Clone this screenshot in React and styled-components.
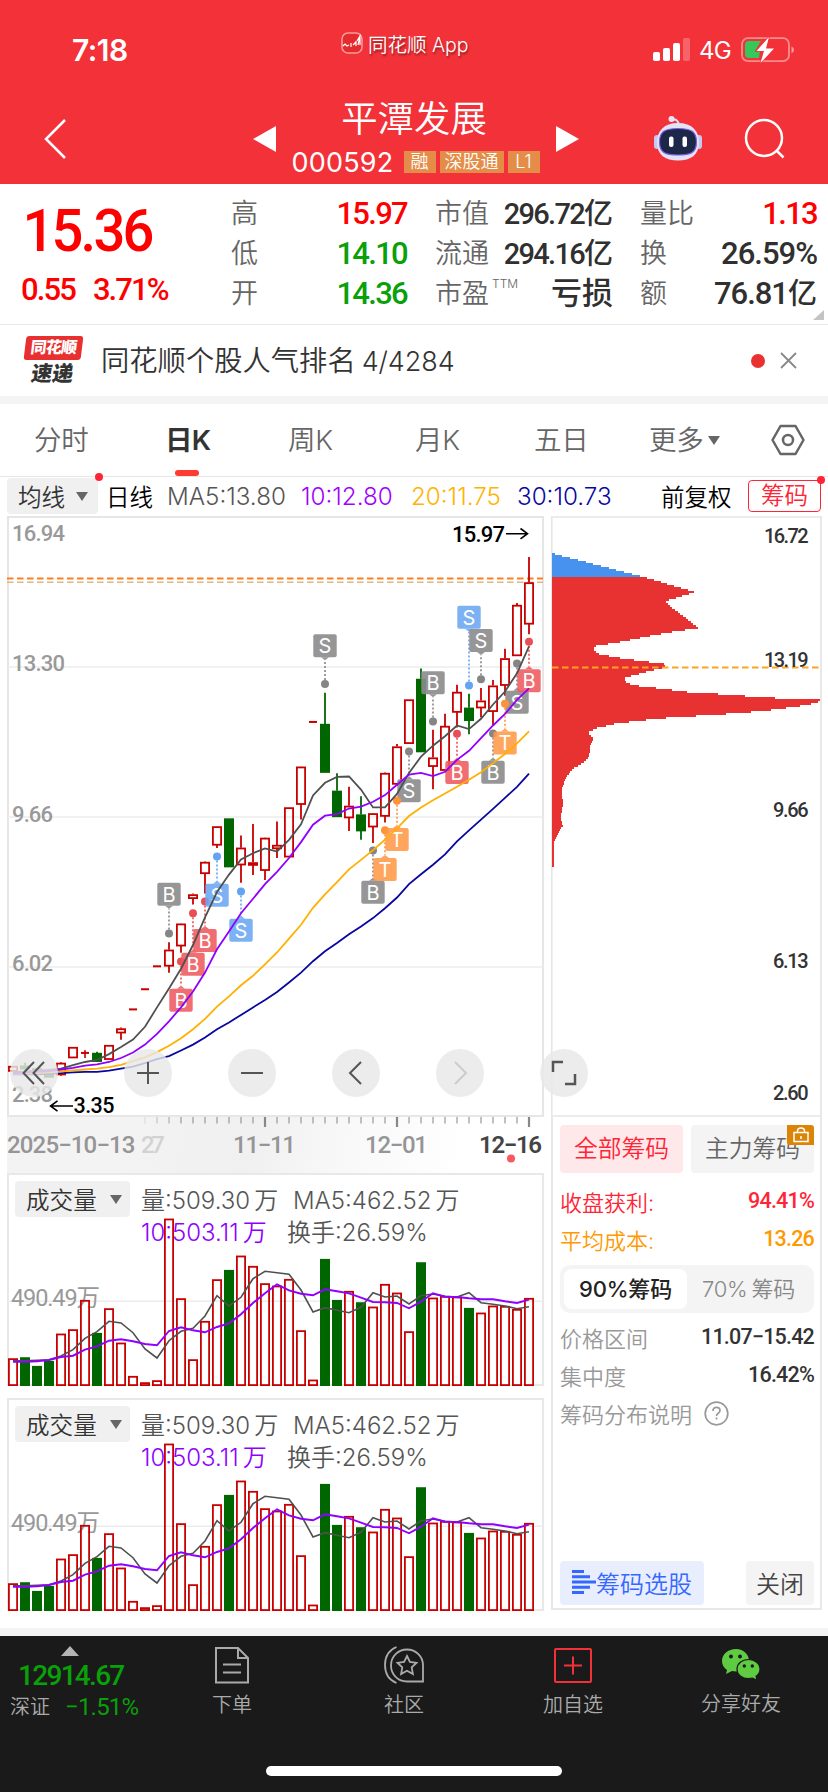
import React from 'react';
import styled, { createGlobalStyle } from 'styled-components';

const ui = 'Inter, "Noto Sans CJK SC", sans-serif';
const num = 'Roboto, "Noto Sans CJK SC", sans-serif';

const GlobalStyle = createGlobalStyle`
  * {
    box-sizing: border-box;
  }

  body {
    margin: 0;
    background: #fff;
    font-family: ${ui};
    color: #333;
  }

  svg {
    display: block;
    flex: none;
    overflow: visible;
  }
`

const Screen = styled.div`
  width: 828px;
  height: 1792px;
  overflow: hidden;
  display: flex;
  flex-direction: column;
  background: #fff;
  white-space: nowrap;
`

/* ---------- header ---------- */

const Header = styled.header`
  height: 184px;
  flex: none;
  background: #f33138;
  color: #fff;
`

const StatusBar = styled.div`
  height: 96px;
  padding: 2px 32px 0 72px;
  display: grid;
  grid-template-columns: 269px 312px 1fr;
  align-items: center;
`

const Clock = styled.div`
  font-size: 30px;
  font-weight: 600;
  letter-spacing: -0.5px;
  padding-top: 2px;
`

const AppMark = styled.div`
  display: flex;
  align-items: center;
  gap: 5px;
  font-size: 19.5px;
  font-weight: 350;
  padding-bottom: 12px;
  text-shadow: 1px 2px 2px rgba(0, 0, 0, 0.4);
`

const StatusIcons = styled.div`
  display: flex;
  align-items: center;
  font-size: 24px;
  padding-top: 2px;

  span {
    width: 50px;
    padding-left: 8px;
    letter-spacing: -0.8px;
  }
`

const NavBar = styled.nav`
  height: 88px;
  padding: 0 44px 0 44px;
  display: grid;
  grid-template-columns: 209px 39px 247px 39px 76px 90px 1fr;
  align-items: center;

  > svg {
    margin-top: -3px;
  }
`

const StockTitle = styled.div`
  height: 88px;
  display: flex;
  flex-direction: column;
  align-items: center;
`

const StockName = styled.h1`
  margin: 3px 0 0 -3px;
  font-size: 36.4px;
  font-weight: 350;
  line-height: 40px;
`

const StockCode = styled.div`
  display: flex;
  align-items: center;
  gap: 4px;
  margin-top: 12px;
  height: 22px;
  font-size: 27px;

  b {
    font-weight: 400;
    margin-right: 7px;
    width: 101px;
    letter-spacing: 0.2px;
  }
`

const Tag = styled.span`
  width: ${props => props.$w}px;
  height: 22px;
  line-height: 21px;
  text-align: center;
  font-size: 18px;
  font-weight: 350;
  background: #e48d49;
`

/* ---------- quote ---------- */

const Quote = styled.section`
  height: 141px;
  flex: none;
  position: relative;
  display: flex;
  border-bottom: 1px solid #e8e8e8;
  font-family: ${num};
`

const PriceBox = styled.div`
  width: 231px;
  color: #f00;
  font-weight: 500;
`

const Price = styled.div`
  padding-left: 24px;
  height: 74px;
  font-size: 60px;
  letter-spacing: -3px;
  line-height: 94px;
  transform: scaleX(0.935);
  transform-origin: left;
`

const Change = styled.div`
  display: flex;
  gap: 18px;
  padding: 16px 0 0 21px;
  font-size: 31px;
  line-height: 32px;
  letter-spacing: -1.9px;
`

const Stats = styled.div`
  width: ${props => props.$w}px;
  margin-right: ${props => props.$gap}px;
  padding-top: 10px;
`

const Stat = styled.div`
  display: flex;
  justify-content: space-between;
  height: 40px;
  line-height: 40px;

  span {
    font-size: 27px;
    font-weight: 350;
    color: #666;
  }

  sup {
    font-family: ${ui};
    font-size: 12px;
    line-height: 12px;
    vertical-align: 15px;
    margin-left: 3px;
  }

  b {
    font-size: ${props => props.$size || 31}px;
    font-weight: 500;
    letter-spacing: ${props => props.$ls || -1.7}px;
    margin-right: ${props => props.$mr || 0}px;
    color: ${props => props.$color || '#303030'};
  }

  i {
    font-style: normal;
    font-size: ${props => props.$unit || 29}px;
    letter-spacing: 0;
  }
`

const Corner = styled.svg`
  position: absolute;
  right: 4px;
  bottom: 4px;
`

/* ---------- news ---------- */

const News = styled.section`
  height: 71px;
  flex: none;
  display: flex;
  align-items: center;
  padding: 0 31px 0 25px;
`

const NewsLogo = styled.div`
  width: 57px;
  margin-right: 19px;
  text-align: center;
  font-weight: 900;
  line-height: 24px;
  color: #333;

  div {
    height: 24px;
    font-size: 16px;
    letter-spacing: -0.8px;
    color: #fff;
    background: #e93030;
    border-radius: 3px;
    transform: skewX(-7deg);
    line-height: 23px;
  }

  p {
    margin: 1px 0 0;
    font-size: 21px;
    line-height: 25px;
    transform: skewX(-9deg);
    padding-right: 2px;
  }
`

const NewsText = styled.div`
  flex: 1;
  font-size: 28.3px;
  font-weight: 350;
  padding-bottom: 4px;

  span {
    font-size: 27px;
    margin-left: 6px;
    letter-spacing: -0.1px;
  }
`

const NewsDot = styled.i`
  width: 14px;
  height: 14px;
  border-radius: 50%;
  background: #ea3131;
  margin-right: 15px;
`

const Band = styled.div`
  height: 8px;
  flex: none;
  background: #f4f4f4;
`

/* ---------- tabs ---------- */

const Tabs = styled.div`
  height: 73px;
  flex: none;
  display: grid;
  grid-template-columns: 34px 131px 123px 127px 119px 115px 122px 1fr;
  align-items: center;
  border-bottom: 1px solid #e6e6e6;
`

const Tab = styled.div`
  height: 72px;
  line-height: 70px;
  position: relative;
  font-size: 27.5px;
  letter-spacing: ${props => (props.$on ? -0.8 : -0.3)}px;
  font-weight: ${props => (props.$on ? 600 : 350)};
  color: ${props => (props.$on ? '#333' : '#666')};
  display: flex;
  align-items: center;
  gap: 5px;

  &::after {
    content: '';
    display: ${props => (props.$on ? 'block' : 'none')};
    position: absolute;
    left: 10px;
    bottom: 0;
    width: 24px;
    height: 6px;
    border-radius: 3px;
    background: #ff3a30;
  }
`

const Caret = styled.i`
  border: 6px solid transparent;
  border-top: ${props => props.$h || 9}px solid #666;
  border-bottom: 0;
`

/* ---------- indicator line ---------- */

const Indicators = styled.div`
  height: 39px;
  flex: none;
  display: flex;
  align-items: center;
  padding: 2px 7px 3px;
  font-size: 23.5px;
  font-weight: 350;
  color: #000;
`

const Select = styled.div`
  position: relative;
  width: ${props => props.$w}px;
  height: 36px;
  display: flex;
  align-items: center;
  justify-content: space-between;
  padding: 0 ${props => props.$pr || 8}px 0 11px;
  border-radius: 4px;
  background: #f0f0f0;
  font-size: 23.6px;
  font-weight: 350;
  color: #333;
`

const Dot = styled.i`
  position: absolute;
  top: -5px;
  right: -5px;
  width: 8px;
  height: 8px;
  border-radius: 50%;
  background: #ff2436;
`

const Ma = styled.span`
  width: ${props => props.$w}px;
  color: ${props => props.$color};
  font-size: ${props => (props.$color ? 24.2 : 23.5)}px;
  padding-left: ${props => props.$pl || 0}px;
`

const ChipButton = styled.div`
  position: relative;
  width: 73px;
  height: 32px;
  margin-left: auto;
  line-height: 29px;
  text-align: center;
  border: 1.5px solid #ff2436;
  border-radius: 4px;
  color: #ff2436;
`

/* ---------- charts ---------- */

const Main = styled.main`
  position: relative;
  height: 1112px;
  flex: none;
  display: flex;
  gap: 7px;
  padding: 0 7px;
`

const LeftColumn = styled.div`
  width: 537px;
`

const DateAxis = styled.div`
  height: 56px;
  background: linear-gradient(100deg, #f3f3f3 0, #f3f3f3 22%, #f0f0f0 45%, #f8f8f8 62%, #fff 85%);
`

const VolumeBox = styled.section`
  position: relative;
  height: 213px;
  margin-bottom: 12px;
  border: 2px solid #e8e8e8;
  padding: 6px;

  > svg {
    position: absolute;
    left: -2px;
    top: -2px;
  }
`

const VolumeHead = styled.div`
  display: flex;
  gap: 11px;
`

const VolumeText = styled.div`
  font-size: 24px;
  font-weight: 350;
  line-height: 32px;
  padding-top: 4px;
  color: #555;

  div {
    display: grid;
    grid-template-columns: 152px auto;
  }

  div + div {
    grid-template-columns: 146px auto;
  }

  em {
    font-style: normal;
    color: #9000ff;
  }
`

const Unit = styled.span`
  margin-left: 4px;
`

const ChipColumn = styled.section`
  width: 271px;
  height: 1094px;
  border: 2px solid #e8e8e8;
  border-width: 0 2px 2px 0;
`

const ChipPanel = styled.div`
  height: 491px;
  display: flex;
  flex-direction: column;
  padding: 8px 6px 3px 7px;
  border-left: 2px solid #e8e8e8;
`

const ChipTabs = styled.div`
  display: flex;
  gap: 8px;
  margin-bottom: 9px;
`

const ChipTab = styled.div`
  position: relative;
  width: 123px;
  height: 48px;
  border-radius: 4px;
  line-height: 48px;
  text-align: center;
  font-size: 23.8px;
  font-weight: 350;
  color: ${props => (props.$on ? '#ff2436' : '#666')};
  background: ${props => (props.$on ? '#ffe8ea' : '#f4f4f4')};
`

const Lock = styled.div`
  position: absolute;
  top: 0;
  right: 0;
  width: 27px;
  height: 20px;
  border-radius: 0 3px 0 3px;
  background: #dc8405;
  display: flex;
  justify-content: center;
`

const ChipRow = styled.div`
  display: flex;
  align-items: center;
  justify-content: space-between;
  height: 38px;
  font-size: 22px;
  font-weight: 350;
  color: ${props => props.$color || '#999'};

  b {
    font: 500 21.5px ${num};
    letter-spacing: -0.8px;
    padding-bottom: 2px;
    color: ${props => props.$value || props.$color};
  }
`

const Segment = styled.div`
  display: flex;
  height: 48px;
  margin: 7px 0 5px;
  padding: 4px;
  border-radius: 10px;
  background: #f4f4f4;
`

const SegmentItem = styled.div`
  width: 123px;
  height: 40px;
  line-height: 40px;
  text-align: center;
  border-radius: 8px;
  font-size: 22px;
  letter-spacing: -0.2px;
  font-weight: ${props => (props.$on ? 500 : 350)};
  color: ${props => (props.$on ? '#222' : '#888')};
  background: ${props => (props.$on ? '#fff' : 'none')};
`

const HelpRow = styled(ChipRow)`
  justify-content: flex-start;
  gap: 12px;
`

const ChipFooter = styled.div`
  margin-top: auto;
  display: flex;
  justify-content: space-between;
`

const FooterButton = styled.div`
  width: ${props => props.$w}px;
  height: 44px;
  display: flex;
  align-items: center;
  justify-content: center;
  border-radius: 4px;
  font-size: 24px;
  font-weight: 350;
  padding-bottom: 2px;
  color: ${props => props.$color};
  background: ${props => props.$bg};
`

const Tools = styled.div`
  position: absolute;
  left: 10px;
  top: 533px;
  display: flex;
`

const Tool = styled.div`
  width: 48px;
  height: 48px;
  margin-right: ${props => props.$gap || 56}px;
  border-radius: 50%;
  background: rgba(232, 232, 232, 0.82);
  display: flex;
  align-items: center;
  justify-content: center;
`

/* ---------- bottom bar ---------- */

const BottomBar = styled.footer`
  height: 156px;
  background: #1a1a1a;
  color: #aaa;
  display: flex;
  flex-direction: column;
  justify-content: space-between;
  align-items: center;
  padding-bottom: 16px;
`

const BottomItems = styled.div`
  width: 828px;
  display: grid;
  grid-template-columns: 146px 172px 172px 166px 170px;
`

const IndexBox = styled.div`
  padding: 10px 0 0 10px;
  font-family: ${num};
  color: #09a009;

  svg {
    margin-left: 51px;
  }

  strong {
    display: block;
    font-size: 28px;
    line-height: 39px;
    font-weight: 500;
    margin-left: 8px;
    letter-spacing: -1.7px;
  }

  div {
    display: flex;
    font-size: 24px;
    line-height: 24px;
    letter-spacing: -0.8px;
  }

  span {
    width: 55px;
    font-size: 20px;
    font-weight: 350;
    letter-spacing: 0;
    color: #aaa;
  }
`

const BottomItem = styled.div`
  display: flex;
  flex-direction: column;
  align-items: center;
  padding-top: 10px;
  font-size: 20px;
  font-weight: 350;
  line-height: 30px;

  svg {
    margin-bottom: 6px;
  }
`

const HomeIndicator = styled.div`
  width: 296px;
  height: 10px;
  border-radius: 5px;
  background: #fff;
`

// x of the i-th trading day, one every 12px
const dayX = i => 13 + i * 12;
// plot units to y: the price plot and the volume plot have their own scale
const priceY = v => 510 + v / 2.529;
const volY = v => 1110 + v / 3;

const RED = '#c80000';
const GREEN = '#006600';

// [up, body top, body bottom, wick top, wick bottom]
const candles = [
    [1, 1406, 1419], [0, 1405, 1413, 1398, 1415], [0, 1412, 1420], [0, 1424, 1434],
    [1, 1398, 1428, 1396, 1431], [1, 1358, 1385], [1, 1373, 1375, 1366, 1386], [0, 1373, 1394, 1370, 1396],
    [1, 1353, 1389], [1, 1311, 1322, 1309, 1340], [1, 1263, 1263], [1, 1212, 1212],
    [1, 1154, 1154], [1, 1112, 1153, 1093, 1170], [1, 1046, 1102, 1045, 1120], [1, 972, 982, 970, 998],
    [1, 890, 919, 889, 970], [1, 800, 847, 799, 855], [0, 780, 902], [1, 854, 897, 823, 943],
    [1, 891, 898, 794, 923], [1, 829, 911, 828, 936], [1, 847, 856, 788, 880], [1, 752, 877],
    [1, 649, 744, 648, 783], [1, 536, 536], [0, 541, 663, 462, 663], [0, 710, 775, 666, 775],
    [1, 748, 778, 700, 812], [0, 770, 811, 724, 834], [1, 767, 801, 766, 842], [1, 665, 774, 664, 790],
    [1, 598, 693, 592, 698], [1, 479, 590], [0, 427, 611, 401, 611], [1, 626, 648, 556, 706],
    [1, 546, 658, 515, 659], [1, 460, 511, 442, 550], [0, 500, 532, 465, 567], [1, 482, 500, 450, 525],
    [1, 444, 509, 430, 545], [1, 375, 443, 351, 470], [1, 240, 368, 235, 369], [1, 183, 288, 119, 314],
];

const averages = [
    {
        color: '#0808a0',
        points: [1427, 1427, 1427, 1426, 1424, 1422, 1421, 1421, 1418, 1413, 1408, 1399, 1389, 1381, 1367, 1352, 1334, 1313, 1296, 1277, 1258, 1239, 1219, 1195, 1170, 1141, 1116, 1095, 1073, 1053, 1032, 1007, 980, 946, 921, 897, 871, 838, 810, 783, 756, 728, 700, 667],
    },
    {
        color: '#ffb000',
        points: [1425, 1425, 1424, 1422, 1420, 1417, 1415, 1413, 1409, 1403, 1394, 1384, 1371, 1355, 1336, 1313, 1287, 1256, 1230, 1202, 1178, 1149, 1119, 1084, 1049, 1006, 972, 941, 909, 885, 860, 834, 805, 774, 752, 734, 717, 700, 682, 663, 640, 617, 590, 560],
    },
    {
        color: '#505050',
        points: [1422, 1420, 1418, 1416, 1413, 1404, 1396, 1391, 1376, 1358, 1339, 1307, 1258, 1210, 1160, 1100, 1030, 966, 922, 884, 868, 856, 864, 834, 795, 722, 690, 675, 674, 707, 752, 752, 718, 665, 624, 596, 572, 545, 554, 528, 492, 459, 413, 345],
    },
    {
        color: '#9000ff',
        points: [1424, 1423, 1421, 1419, 1415, 1411, 1405, 1402, 1396, 1386, 1372, 1352, 1325, 1293, 1258, 1218, 1170, 1111, 1066, 1020, 983, 946, 915, 880, 840, 796, 773, 769, 755, 750, 738, 721, 695, 669, 665, 673, 662, 632, 609, 577, 545, 516, 480, 451],
    },
];

const marks = {
    gray: { box: '#8c8c8ce8', dot: '#858585' },
    red: { box: '#ee5a5ee0', dot: '#ea4e55' },
    blue: { box: '#6aa6f2e0', dot: '#62a3f3' },
    orange: { box: '#ff9745dd', dot: '#ff9238' },
};

// [day, letter, kind, dot, box centre]
const signals = [
    [13, 'B', 'gray', 1071, 972], [14, 'B', 'red', 1142, 1240], [15, 'B', 'red', 1020, 1149],
    [16, 'B', 'red', 990, 1089], [17, 'S', 'blue', 876, 974], [19, 'S', 'blue', 965, 1063],
    [26, 'S', 'gray', 440, 343], [30, 'B', 'gray', 861, 967], [31, 'T', 'orange', 810, 909],
    [33, 'S', 'gray', 611, 710], [32, 'T', 'orange', 735, 833], [35, 'B', 'gray', 535, 437],
    [37, 'B', 'red', 566, 664], [38, 'S', 'blue', 444, 271], [39, 'S', 'gray', 428, 330],
    [40, 'B', 'gray', 565, 663], [42, 'S', 'gray', 388, 486], [41, 'T', 'orange', 490, 589],
    [43, 'B', 'red', 333, 432],
];

// [up, bar top]
const volumes = [
    [1, 745], [0, 742], [0, 768], [0, 753], [1, 671], [1, 658], [1, 570], [0, 669], [1, 595], [1, 698], [1, 798],
    [1, 817], [1, 811], [1, 326], [1, 565], [1, 748], [1, 633], [1, 508], [0, 480], [1, 437], [1, 468], [1, 520],
    [1, 527], [1, 507], [1, 661], [1, 809], [0, 447], [0, 570], [1, 543], [0, 577], [1, 590], [1, 522], [1, 548],
    [1, 664], [0, 457], [1, 563], [1, 558], [1, 560], [0, 594], [1, 608], [1, 587], [1, 588], [1, 597], [1, 564],
];
const volumeMa5 = [752, 752, 751, 749, 738, 719, 685, 665, 634, 639, 668, 717, 744, 692, 664, 655, 618, 557, 588, 562, 506, 484, 488, 493, 540, 606, 593, 601, 608, 592, 548, 561, 558, 582, 557, 552, 559, 561, 548, 578, 583, 588, 596, 590];
const volumeMa10 = [755, 755, 754, 750, 741, 737, 719, 709, 692, 688, 694, 702, 706, 663, 652, 661, 667, 651, 640, 613, 579, 550, 523, 541, 551, 556, 538, 544, 550, 563, 576, 577, 579, 595, 575, 550, 560, 561, 565, 568, 568, 574, 579, 569];

// outline of the chip distribution, [width, height on the price plot]
const chips = [
    [36, 109], [42, 112], [308, 170], [320, 173], [462, 208], [450, 212], [375, 231], [390, 245], [474, 299],
    [380, 311], [222, 337], [157, 346], [163, 358], [175, 365], [245, 376], [378, 391], [370, 399], [310, 412],
    [255, 424], [252, 434], [275, 444], [380, 454], [420, 460], [586, 469], [650, 474], [775, 479], [837, 481],
    [837, 485], [800, 494], [670, 509], [550, 517], [355, 528], [225, 541], [170, 552], [142, 563], [159, 580],
    [148, 595], [146, 625], [125, 642], [97, 655], [80, 673], [64, 703], [66, 735], [68, 745], [60, 775],
    [66, 800], [55, 815], [42, 838], [39, 845], [39, 903],
];

const chipWidth = v => {
    const n = chips.findIndex(c => c[1] >= v);
    if (n < 1) return chips[0][0];
    const [w0, v0] = chips[n - 1];
    const [w1, v1] = chips[n];
    return w0 + ((w1 - w0) * (v - v0)) / (v1 - v0);
};

const chipRows = [];
for (let v = 109; v < 902; v += 5.058) chipRows.push(v);

const toPoints = (values, y) => values.map((v, i) => `${dayX(i)},${y(v).toFixed(1)}`).join(' ');

const Candle = ({ i, data }) => {
    const [up, top, bottom, high = top, low = bottom] = data;
    const x = dayX(i);
    const y = priceY(top);
    const h = priceY(bottom) - y;
    const color = up ? RED : GREEN;
    if (h < 2) {
        return (
            <g fill={color}>
                <rect x={x - 4} y={y - 1} width={8} height={2} />
                <rect x={x - 0.8} y={priceY(high)} width={1.6} height={priceY(low) - priceY(high)} />
            </g>
        );
    }
    return (
        <g stroke={color} strokeWidth={1.8}>
            <path d={`M${x} ${priceY(high)}V${y}M${x} ${y + h}V${priceY(low)}`} />
            <rect x={x - 4.1} y={y + 0.8} width={8.2} height={Math.max(h - 1, 1)} fill={up ? 'none' : GREEN} />
        </g>
    );
};

const Signal = ({ data }) => {
    const [day, letter, kind, dot, box] = data;
    const x = dayX(day);
    const y = priceY(box);
    const dotY = priceY(dot);
    const above = y < dotY;
    const edge = above ? y + 11.5 : y - 11.5;
    const tip = above ? edge + 3 : edge - 3;
    return (
        <g>
            <path d={`M${x} ${dotY}V${tip}`} stroke={marks[kind].dot} strokeWidth={1.6} strokeDasharray="2 2" />
            <circle cx={x} cy={dotY} r={4} fill={marks[kind].dot} />
            <path d={`M${x - 4} ${edge}L${x} ${tip}L${x + 4} ${edge}z`} fill={marks[kind].box} />
            <rect x={x - 11.7} y={y - 11.5} width={23.4} height={23} rx={2} fill={marks[kind].box} />
            <text x={x} y={y + 7.5} fontFamily="Inter, sans-serif" fontSize={20} textAnchor="middle" fill="#fff">{letter}</text>
        </g>
    );
};

const AxisLabel = ({ x, y, w, children, fill = '#999', size = 22, weight = 500 }) => (
    <text x={x} y={y} textLength={w} fontFamily={num} fontSize={size} fontWeight={weight} fill={fill}>{children}</text>
);

const KChart = () => (
    <svg width="537" height="601" viewBox="7 516 537 601">
        <rect x="8" y="517" width="535" height="599" fill="#fff" stroke="#e6e6e6" strokeWidth="2" />
        <path d="M8 667H543M8 817H543M8 967H543" stroke="#ededed" strokeWidth="1.5" />
        <AxisLabel x={12} y={671} w={53}>13.30</AxisLabel>
        <AxisLabel x={12} y={822} w={41}>9.66</AxisLabel>
        <AxisLabel x={12} y={971} w={41}>6.02</AxisLabel>
        <AxisLabel x={12} y={1101.5} w={41}>2.38</AxisLabel>
        <AxisLabel x={12} y={541} w={53}>16.94</AxisLabel>
        <path d="M7 578.5H543" stroke="#ff7f1e" strokeWidth="2" strokeDasharray="6.5 3.5" />
        <path d="M7 582.3H543" stroke="#dcb98c" strokeWidth="1.6" strokeDasharray="6.5 3.5" />
        {candles.map((c, i) => <Candle key={i} i={i} data={c} />)}
        {signals.map((s, i) => <Signal key={i} data={s} />)}
        {averages.map(a => (
            <polyline key={a.color} points={toPoints(a.points, priceY)} fill="none" stroke={a.color} strokeWidth="1.8" />
        ))}
        <AxisLabel x={452} y={542} w={53} fill="#000">15.97</AxisLabel>
        <AxisLabel x={73.5} y={1113} w={41} size={21.5} fill="#000">3.35</AxisLabel>
        <path d="M506 533.7H527M520.5 528.5l7 5.2-7 5.2M73 1106H51M57.5 1100.8l-7 5.2 7 5.2" fill="none" stroke="#000" strokeWidth="1.6" />
    </svg>
);

const Dates = () => (
    <svg width="537" height="56" viewBox="7 1117 537 56">
        {candles.map((c, i) => i > 10 && (
            <rect key={i} x={dayX(i) - 0.6} y={1117} width={1.2} height={6.5} fill="#999" opacity={Math.min(1, (i - 10) / 4)} />
        ))}
        <path d="M265 1117v10M397 1117v10M529 1117v10" stroke="#888" strokeWidth="2.2" />
        <AxisLabel x={7} y={1152.5} w={128.5} size={24} fill="#959595">2025−10−13</AxisLabel>
        <AxisLabel x={141} y={1152.5} w={24} size={24} fill="#d2d2d2">27</AxisLabel>
        <AxisLabel x={233} y={1152.5} w={63} size={24} fill="#959595">11−11</AxisLabel>
        <AxisLabel x={365} y={1152.5} w={63} size={24} fill="#959595">12−01</AxisLabel>
        <AxisLabel x={479} y={1152.5} w={63} size={24} fill="#444" weight={600}>12−16</AxisLabel>
        <circle cx="511" cy="1158.5" r="4" fill="#f8585f" />
    </svg>
);

const Volume = () => (
    <VolumeBox>
        <svg width="537" height="213" viewBox="7 1173 537 213">
            <path d="M8 1301.3H543" stroke="#ececec" strokeWidth="1.5" />
            <AxisLabel x={11} y={1306} w={89} size={23.5} weight={400}>490.49万</AxisLabel>
        </svg>
        <VolumeHead>
            <Select $w={115}>成交量<Caret /></Select>
            <VolumeText>
                <div><span>量:509.30<Unit>万</Unit></span><span>MA5:462.52<Unit>万</Unit></span></div>
                <div><em>10:503.11<Unit>万</Unit></em><span>换手:26.59%</span></div>
            </VolumeText>
        </VolumeHead>
        <svg width="537" height="213" viewBox="7 1173 537 213">
            {volumes.map(([up, top], i) => (
                <rect
                    key={i}
                    x={dayX(i) - 4.1}
                    y={volY(top) + 0.8}
                    width={8.2}
                    height={1384.3 - volY(top)}
                    fill={up ? 'none' : GREEN}
                    stroke={up ? RED : GREEN}
                    strokeWidth={1.8}
                />
            ))}
            <polyline points={toPoints(volumeMa5, volY)} fill="none" stroke="#505050" strokeWidth="1.6" />
            <polyline points={toPoints(volumeMa10, volY)} fill="none" stroke="#9000ff" strokeWidth="1.9" />
        </svg>
    </VolumeBox>
);

const ChipChart = () => (
    <svg width="271" height="601" viewBox="551 516 271 601">
        <path d="M821 517H551.8V1116H821" fill="none" stroke="#e6e6e6" strokeWidth="1.6" />
        {chipRows.map(v => (
            <rect
                key={v}
                x={552.3}
                y={Math.round(priceY(v))}
                width={(chipWidth(v + 3) - 36) / 3 + 0.3}
                height={2}
                shapeRendering="crispEdges"
                fill={v < 168 ? '#4792ee' : '#e83131'}
            />
        ))}
        <path d="M552 667.5H820" stroke="#ffa420" strokeWidth="2" strokeDasharray="6.5 3.5" />
        <AxisLabel x={764} y={543} w={44.5} size={20} fill="#333">16.72</AxisLabel>
        <AxisLabel x={764} y={667} w={44.5} size={20} fill="#333">13.19</AxisLabel>
        <AxisLabel x={773} y={817} w={35.5} size={20} fill="#333">9.66</AxisLabel>
        <AxisLabel x={773} y={967.5} w={35.5} size={20} fill="#333">6.13</AxisLabel>
        <AxisLabel x={773} y={1100} w={35.5} size={20} fill="#333">2.60</AxisLabel>
    </svg>
);

const AppIcon = () => (
    <svg width="22" height="22" viewBox="0 0 22 22">
        <rect x="1" y="1" width="20" height="20" rx="6" fill="#e62b2f" stroke="#f79a9c" strokeWidth="1.6" />
        <path d="M2 14l2-2 2 2 2-1M10 15v-4M12 13l3-3M15 14V9M16 9l3-5v9M19 4l-2 9" fill="none" stroke="#fff" strokeWidth="1.2" />
    </svg>
);

const Signals = () => (
    <svg width="38" height="24" viewBox="0 0 38 24" fill="#fff">
        <rect x="0" y="14" width="7" height="9" rx="1.8" />
        <rect x="10" y="10" width="7" height="13" rx="1.8" />
        <rect x="20" y="5" width="7" height="18" rx="1.8" />
        <rect x="30" y="0" width="7" height="23" rx="1.8" opacity="0.25" />
    </svg>
);

const Battery = () => (
    <svg width="54" height="26" viewBox="0 0 54 26">
        <rect x="1" y="1.2" width="47" height="23" rx="6" fill="none" stroke="#fff" strokeOpacity="0.45" strokeWidth="1.8" />
        <path d="M50.5 9.500q2.5 1 2.5 3.400t-2.500 3.400z" fill="#fff" opacity="0.5" />
        <path d="M8 4h12l-6 10h5l-1 7H8q-4 0-4-4V8q0-4 4-4z" fill="#36c75a" />
        <path d="M28 0L15.500 14H23l-3.500 12L33 11.500h-8z" fill="#fff" stroke="#f33138" strokeWidth="1.4" paintOrder="stroke" />
    </svg>
);

const Robot = () => (
    <svg width="48" height="46" viewBox="0 0 48 46">
        <path d="M18 3.500q6-1 6.500 5" fill="none" stroke="#dcdcf5" strokeWidth="2.2" />
        <circle cx="17.5" cy="3" r="3" fill="#e4e4fa" />
        <rect x="0" y="19" width="6" height="14" rx="3" fill="#c5c8f0" />
        <rect x="42" y="19" width="6" height="14" rx="3" fill="#c5c8f0" />
        <path d="M24 7c14 0 21 8 21 19 0 13-8 18.500-21 18.500S3 39 3 26C3 15 10 7 24 7z" fill="#e2e3f6" />
        <path d="M24 12.500c13 0 18.500 3 18.500 13.500S37 39 24 39 5.500 36.500 5.500 26 11 12.500 24 12.500z" fill="#1d2849" stroke="#7b5fe0" strokeWidth="1.2" />
        <rect x="15" y="20.5" width="4.500" height="10.500" rx="2" fill="#fff" />
        <rect x="28.5" y="20.5" width="4.500" height="10.500" rx="2" fill="#fff" />
    </svg>
);

const WeChat = () => (
    <svg width="38" height="37" viewBox="0 0 38 37">
        <path d="M14 3C6 3 0 8 0 15c0 4 2 7 5 9l-1 4 6-3 4 .6C22 25.600 27 21 27 15S22 3 14 3z" fill="#5ecb42" />
        <circle cx="9" cy="10.5" r="2" fill="#1a1a1a" />
        <circle cx="18" cy="10.5" r="2" fill="#1a1a1a" />
        <path d="M26.500 13.500c6.500 0 11.500 4 11.500 9.700 0 3-1.500 5.300-4 7l1 4-4.500-2.200-4 .7c-6.500 0-11.500-4-11.500-9.500s5-9.700 11.500-9.700z" fill="#5ecb42" stroke="#1a1a1a" strokeWidth="1.2" />
        <circle cx="22.3" cy="20" r="1.7" fill="#1a1a1a" />
        <circle cx="30.3" cy="20" r="1.7" fill="#1a1a1a" />
    </svg>
);

function App() {
    return (
        <Screen>
            <GlobalStyle />
            <Header>
                <StatusBar>
                    <Clock>7:18</Clock>
                    <AppMark><AppIcon />同花顺 App</AppMark>
                    <StatusIcons><Signals /><span>4G</span><Battery /></StatusIcons>
                </StatusBar>
                <NavBar>
                    <svg width="24" height="40" viewBox="0 0 24 40"><path d="M21 1L2 20l19 19" fill="none" stroke="#fff" strokeWidth="2.5" /></svg>
                    <svg width="23" height="26"><path d="M23 0v26L0 13z" fill="#fff" /></svg>
                    <StockTitle>
                        <StockName>平潭发展</StockName>
                        <StockCode>
                            <b>000592</b>
                            <Tag $w={32}>融</Tag>
                            <Tag $w={64}>深股通</Tag>
                            <Tag $w={32}>L1</Tag>
                        </StockCode>
                    </StockTitle>
                    <svg width="39" height="26"><path d="M17 0v26l23-13z" fill="#fff" /></svg>
                    <i />
                    <Robot />
                    <svg width="42" height="42" viewBox="0 0 42 42" fill="none" stroke="#fff" strokeWidth="2.5">
                        <circle cx="20" cy="20" r="18" /><path d="M33 33l6.5 6.5" />
                    </svg>
                </NavBar>
            </Header>

            <Quote>
                <PriceBox>
                    <Price>15.36</Price>
                    <Change><span>0.55</span><span>3.71%</span></Change>
                </PriceBox>
                <Stats $w={178} $gap={26}>
                    <Stat $mr={2} $color="#f00"><span>高</span><b>15.97</b></Stat>
                    <Stat $mr={2} $color="#09a009"><span>低</span><b>14.10</b></Stat>
                    <Stat $mr={2} $color="#09a009"><span>开</span><b>14.36</b></Stat>
                </Stats>
                <Stats $w={178} $gap={27}>
                    <Stat $size={29}><span>市值</span><b>296.72<i>亿</i></b></Stat>
                    <Stat $size={29}><span>流通</span><b>294.16<i>亿</i></b></Stat>
                    <Stat $unit={31}><span>市盈<sup>TTM</sup></span><b><i>亏损</i></b></Stat>
                </Stats>
                <Stats $w={177} $gap={0}>
                    <Stat $color="#f00"><span>量比</span><b>1.13</b></Stat>
                    <Stat $ls={-1}><span>换</span><b>26.59%</b></Stat>
                    <Stat $ls={-1}><span>额</span><b>76.81<i>亿</i></b></Stat>
                </Stats>
                <Corner width="11" height="10"><path d="M11 0v10H0z" fill="#c4c4c4" /></Corner>
            </Quote>

            <News>
                <NewsLogo><div>同花顺</div><p>速递</p></NewsLogo>
                <NewsText>同花顺个股人气排名<span>4/4284</span></NewsText>
                <NewsDot />
                <svg width="17" height="17" viewBox="0 0 17 17"><path d="M1 1l15 15M16 1L1 16" stroke="#888" strokeWidth="1.8" /></svg>
            </News>
            <Band />

            <Tabs>
                <i />
                <Tab>分时</Tab>
                <Tab $on>日K</Tab>
                <Tab>周K</Tab>
                <Tab>月K</Tab>
                <Tab>五日</Tab>
                <Tab>更多<Caret /></Tab>
                <svg width="34" height="32" viewBox="0 0 34 32" fill="none" stroke="#666" strokeWidth="2.5" strokeLinejoin="round">
                    <path d="M9.500 2h15L32.500 16l-8 14h-15L1.500 16z" /><circle cx="17" cy="16" r="5" />
                </svg>
            </Tabs>

            <Indicators>
                <Select $w={91} $pr={10}>均线<Caret /><Dot /></Select>
                <Ma $w={69} $pl={8}>日线</Ma>
                <Ma $w={134} $color="#555">MA5:13.80</Ma>
                <Ma $w={110} $color="#9f00ff">10:12.80</Ma>
                <Ma $w={106} $color="#ffb400">20:11.75</Ma>
                <Ma $w={144} $color="#0808a0">30:10.73</Ma>
                <Ma>前复权</Ma>
                <ChipButton>筹码<Dot /></ChipButton>
            </Indicators>

            <Main>
                <LeftColumn>
                    <KChart />
                    <DateAxis><Dates /></DateAxis>
                    <Volume />
                    <Volume />
                </LeftColumn>
                <ChipColumn>
                    <ChipChart />
                    <ChipPanel>
                        <ChipTabs>
                            <ChipTab $on>全部筹码</ChipTab>
                            <ChipTab>
                                主力筹码
                                <Lock>
                                    <svg width="16" height="17" viewBox="0 0 16 17" fill="none" stroke="#fff" strokeWidth="1.5">
                                        <path d="M1 7.500h14v9H1zM4.500 7.500V6q0-3 3.500-3t3.500 3v1.500M8 11v3" />
                                    </svg>
                                </Lock>
                            </ChipTab>
                        </ChipTabs>
                        <ChipRow $color="#ff2436"><span>收盘获利:</span><b>94.41%</b></ChipRow>
                        <ChipRow $color="#ff9900"><span>平均成本:</span><b>13.26</b></ChipRow>
                        <Segment>
                            <SegmentItem $on>90%筹码</SegmentItem>
                            <SegmentItem>70%<Unit>筹码</Unit></SegmentItem>
                        </Segment>
                        <ChipRow $value="#333"><span>价格区间</span><b>11.07−15.42</b></ChipRow>
                        <ChipRow $value="#333"><span>集中度</span><b>16.42%</b></ChipRow>
                        <HelpRow>
                            筹码分布说明
                            <svg width="25" height="25" viewBox="0 0 25 25" fill="none" stroke="#999" strokeWidth="1.7">
                                <circle cx="12.5" cy="12.5" r="11.3" />
                                <path d="M9 10q0-3.700 3.500-3.700T16 9.600q0 1.700-2 2.900-1.500 1-1.500 2.500M12.500 16.600v2" />
                            </svg>
                        </HelpRow>
                        <ChipFooter>
                            <FooterButton $w={144} $color="#3568ff" $bg="#e9eeff">
                                <svg width="24" height="26" viewBox="0 0 24 26"><path d="M0 2.500h12M0 7.700h18M0 13h24M0 18.200h18M0 23.500h12" stroke="#3568ff" strokeWidth="3" /></svg>
                                筹码选股
                            </FooterButton>
                            <FooterButton $w={68} $color="#444" $bg="#f4f4f4">关闭</FooterButton>
                        </ChipFooter>
                    </ChipPanel>
                </ChipColumn>
                <Tools>
                    <Tool $gap={66}><svg width="24" height="24" fill="none" stroke="#555" strokeWidth="2"><path d="M12 1L1.500 12 12 23M22 1L11.500 12 22 23" /></svg></Tool>
                    <Tool><svg width="22" height="22" stroke="#555" strokeWidth="2"><path d="M0 11h22M11 0v22" /></svg></Tool>
                    <Tool><svg width="22" height="22" stroke="#555" strokeWidth="2"><path d="M0 11h22" /></svg></Tool>
                    <Tool><svg width="14" height="24" fill="none" stroke="#555" strokeWidth="2"><path d="M12 1L1 12l11 11" /></svg></Tool>
                    <Tool><svg width="14" height="24" fill="none" stroke="#ccc" strokeWidth="2"><path d="M2 1l11 11L2 23" /></svg></Tool>
                    <Tool $gap={1}><svg width="26" height="26" fill="none" stroke="#555" strokeWidth="2.5"><path d="M2 12V2h10M24 14v10H14" /></svg></Tool>
                </Tools>
            </Main>
            <Band />

            <BottomBar>
                <BottomItems>
                    <IndexBox>
                        <svg width="18" height="10"><path d="M9 0l9 10H0z" fill="#b5b5b5" /></svg>
                        <strong>12914.67</strong>
                        <div><span>深证</span>−1.51%</div>
                    </IndexBox>
                    <BottomItem>
                        <svg width="34" height="38" viewBox="0 0 34 38" fill="none" stroke="#aaa" strokeWidth="2">
                            <path d="M1 2h22l10 10v24.500H1zM23 2v10h10M8 18.500h18M8 26.500h18" />
                        </svg>
                        下单
                    </BottomItem>
                    <BottomItem>
                        <svg width="40" height="38" viewBox="0 0 40 38" fill="none" stroke="#aaa" strokeWidth="1.8">
                            <path d="M12.500 1C5 4 1 11 1 19s4 15 11.500 18M23 3.500c9 0 16 7 16 15.500v16.500H23c-9 0-16-7-16-16s7-16 16-16z" />
                            <path d="M23 10l2.900 6 6.600.8-4.800 4.600 1.200 6.600-5.900-3.200-5.900 3.200 1.200-6.600-4.800-4.600 6.600-.8z" />
                        </svg>
                        社区
                    </BottomItem>
                    <BottomItem>
                        <svg width="38" height="38" viewBox="0 0 38 38" fill="none" stroke="#f33138" strokeWidth="2">
                            <rect x="1" y="3" width="36" height="33" rx="1" /><path d="M10 19.500h18M19 10.500v18" />
                        </svg>
                        加自选
                    </BottomItem>
                    <BottomItem>
                        <WeChat />
                        分享好友
                    </BottomItem>
                </BottomItems>
                <HomeIndicator />
            </BottomBar>
        </Screen>
    );
}

export default App;
